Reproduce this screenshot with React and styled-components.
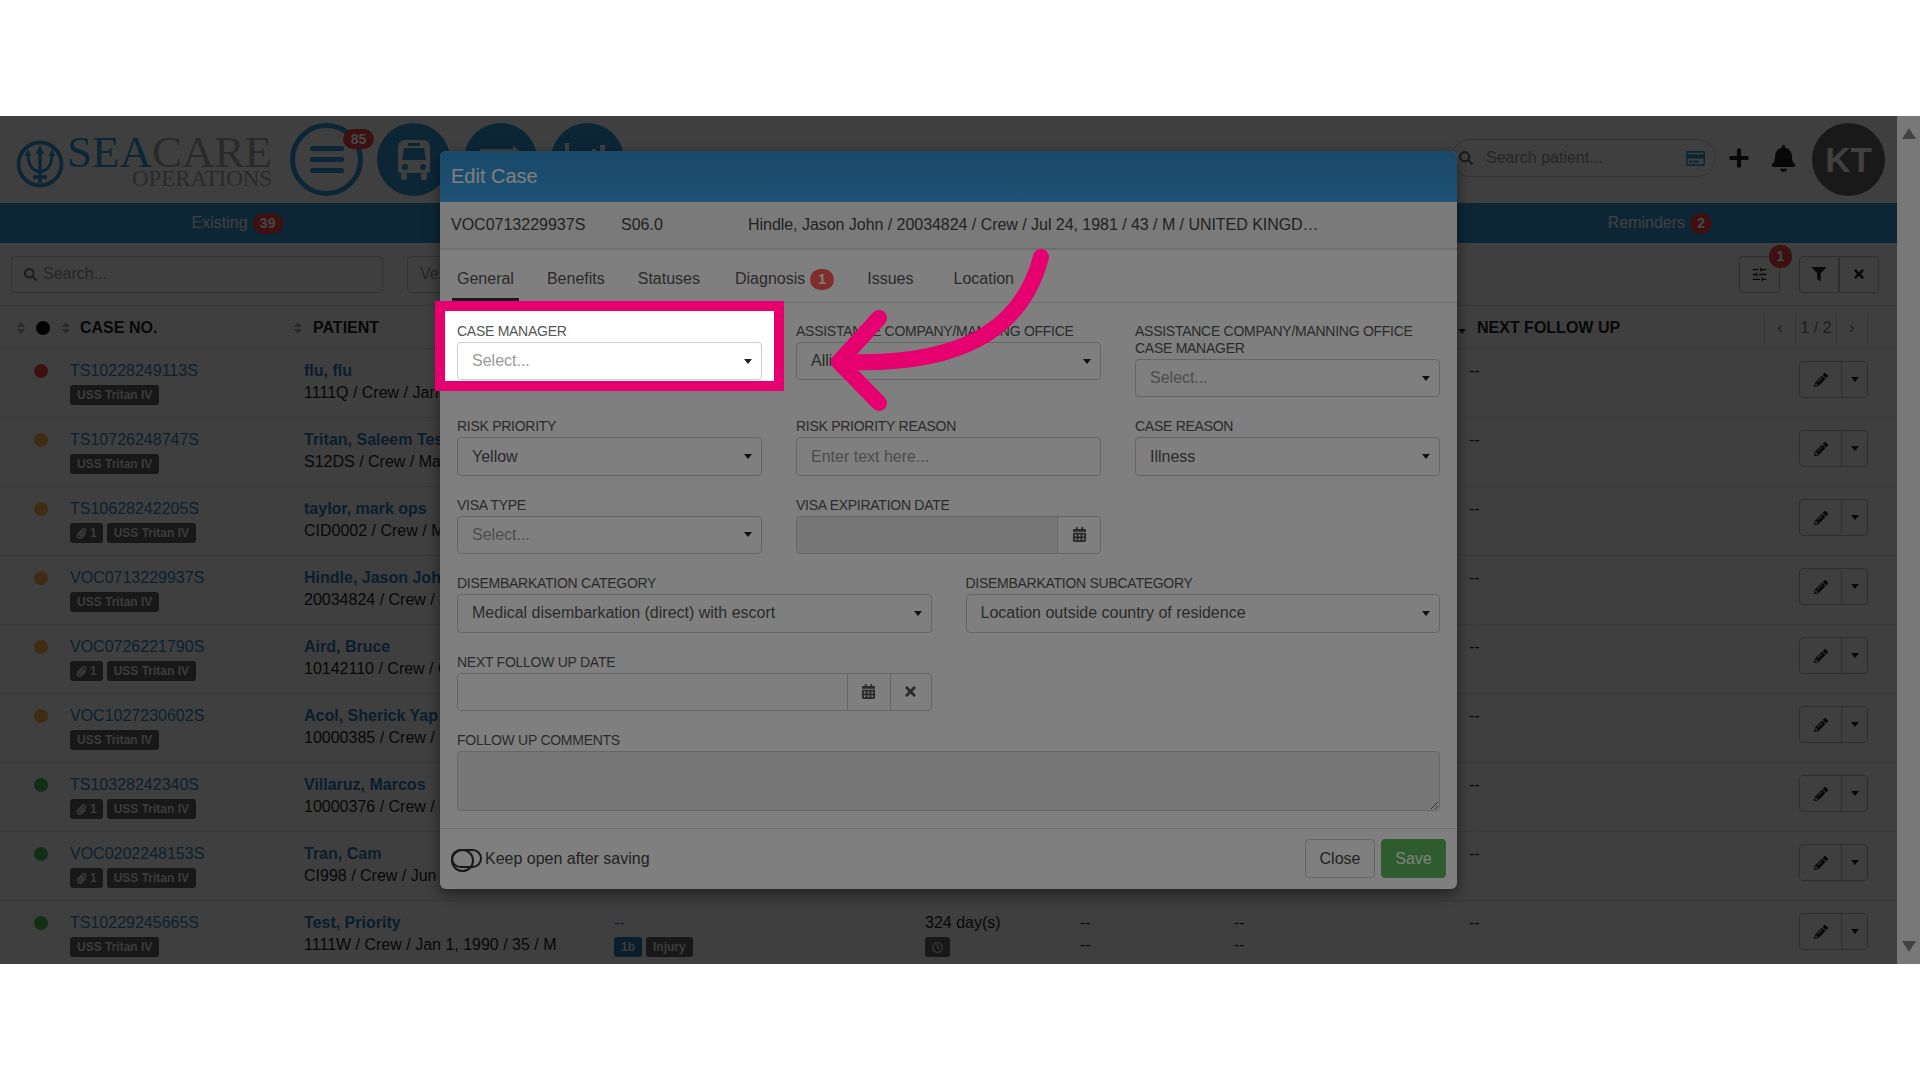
import React from "react";
import styled, { createGlobalStyle } from "styled-components";
import {
  FaSearch,
  FaRegCreditCard,
  FaPlus,
  FaBell,
  FaFilter,
  FaTimes,
  FaPencilAlt,
  FaPaperclip,
  FaCalendarAlt,
  FaRegClock,
} from "react-icons/fa";
import { SlidersHorizontal } from "lucide-react";

const BLUE = "#3498db";
const PINK = "#e6006f";
const RED = "#7d2323";
const AMBER = "#7d5a28";
const GREEN = "#235f28";

const cases = [
  { id: "TS10228249113S", dot: RED, name: "flu, flu", info: "1111Q / Crew / Jan 1" },
  { id: "TS10726248747S", dot: AMBER, name: "Tritan, Saleem Test", info: "S12DS / Crew / Mar" },
  { id: "TS10628242205S", dot: AMBER, clip: true, name: "taylor, mark ops", info: "CID0002 / Crew / Mar" },
  { id: "VOC0713229937S", dot: AMBER, name: "Hindle, Jason John", info: "20034824 / Crew / Jul" },
  { id: "VOC0726221790S", dot: AMBER, clip: true, name: "Aird, Bruce", info: "10142110 / Crew / Oct" },
  { id: "VOC1027230602S", dot: AMBER, name: "Acol, Sherick Yap", info: "10000385 / Crew / Sep" },
  { id: "TS10328242340S", dot: GREEN, clip: true, name: "Villaruz, Marcos", info: "10000376 / Crew / Dec" },
  { id: "VOC0202248153S", dot: GREEN, clip: true, name: "Tran, Cam", info: "CI998 / Crew / Jun" },
  {
    id: "TS10229245665S",
    dot: GREEN,
    name: "Test, Priority",
    info: "1111W / Crew / Jan 1, 1990 / 35 / M",
    diagnosis: true,
  },
];

const GlobalStyle = createGlobalStyle`
  html, body {
    margin: 0;
    height: 100%;
    overflow: hidden;
    background: #ffffff;
    font-family: "Liberation Sans", Arial, sans-serif;
    font-size: 16px;
  }
  * { box-sizing: border-box; }
`;

const Stage = styled.div`
  height: 100vh;
  display: flex;
  align-items: center;
`;

const Frame = styled.div`
  position: relative;
  width: 100%;
  height: 848px;
  display: flex;
  overflow: hidden;
`;

const Main = styled.div`
  position: relative;
  flex: 1;
  min-width: 0;
  background: #ffffff;
  color: #222;
`;

const Rail = styled.div`
  width: 23px;
  background: #f1f1f1;
  display: flex;
  flex-direction: column;
  justify-content: space-between;
  align-items: center;
  padding: 12px 0 12px;
`;

const RailArrow = styled.div`
  width: 0;
  height: 0;
  border-left: 7px solid transparent;
  border-right: 7px solid transparent;
  ${(p) => (p.$down ? "border-top: 11px solid #888;" : "border-bottom: 11px solid #888;")}
`;

/* page header */
const Header = styled.header`
  height: 87px;
  display: flex;
  align-items: center;
  padding: 0 12px 0 16px;
`;

const Logo = styled.div`
  display: flex;
  align-items: flex-start;
  width: 256px;
  margin-right: 18px;
`;

const LogoText = styled.div`
  font-family: "Liberation Serif", "Times New Roman", serif;
  text-align: right;
  color: #aaa;
  flex: 1;
  margin-left: 3px;
  padding-top: 1px;
`;

const LogoMain = styled.div`
  font-size: 45px;
  line-height: 42px;
  white-space: nowrap;
  span {
    color: ${BLUE};
  }
`;

const LogoSub = styled.div`
  font-size: 23px;
  line-height: 20px;
  letter-spacing: -0.05px;
  margin-top: -4px;
`;

const NavCircle = styled.div`
  position: relative;
  width: 73px;
  height: 73px;
  flex: none;
  margin-right: 14px;
  border-radius: 50%;
  display: flex;
  align-items: center;
  justify-content: center;
  color: #ffffff;
  background: ${(p) => (p.$ring ? "#ffffff" : BLUE)};
  border: ${(p) => (p.$ring ? `5px solid ${BLUE}` : "none")};
`;

const Burger = styled.div`
  width: 34px;
  display: flex;
  flex-direction: column;
  gap: 6px;
  i {
    display: block;
    height: 5px;
    border-radius: 2px;
    background: ${BLUE};
  }
`;

const Badge = styled.span`
  position: ${(p) => (p.$float ? "absolute" : "relative")};
  z-index: 1;
  ${(p) => p.$float && `top: ${p.$top}px; right: ${p.$right}px;`}
  display: inline-flex;
  align-items: center;
  justify-content: center;
  min-width: ${(p) => p.$w || 22}px;
  height: ${(p) => p.$h || 21}px;
  padding: 0 6px;
  border-radius: 11px;
  background: #7a2222;
  color: #8f8f8f;
  font-size: 14px;
  font-weight: bold;
`;

const TabBadge = styled(Badge)`
  background: #ff5a5a;
  color: #ffffff;
`;

const HeadRight = styled.div`
  margin-left: auto;
  margin-bottom: 3px;
  display: flex;
  align-items: center;
`;

const PatientSearch = styled.div`
  width: 265px;
  height: 38px;
  border: 1px solid #ccc;
  border-radius: 19px;
  display: flex;
  align-items: center;
  padding: 0 10px 0 7px;
  color: #777;
`;

const PatientSearchText = styled.span`
  flex: 1;
  margin-left: 13px;
  color: #999;
`;

const HeadIcon = styled.div`
  display: flex;
  justify-content: center;
  width: ${(p) => p.$w}px;
  color: #222;
`;

const Avatar = styled.div`
  position: relative;
  z-index: 1;
  width: 73px;
  height: 73px;
  margin: 3px 0 0 8px;
  border-radius: 50%;
  background: #333333;
  color: #808080;
  display: flex;
  align-items: center;
  justify-content: center;
  font-size: 35px;
  font-weight: bold;
`;

/* section tabs */
const SectionTabs = styled.nav`
  height: 40px;
  background: ${BLUE};
  display: grid;
  grid-template-columns: repeat(4, 1fr);
`;

const SectionTab = styled.div`
  display: flex;
  align-items: center;
  justify-content: center;
  gap: 5px;
  color: #ffffff;
`;

/* toolbar */
const Toolbar = styled.div`
  height: 63px;
  border-bottom: 1px solid #ddd;
  display: flex;
  align-items: center;
  padding: 0 18px 0 11px;
`;

const FilterInput = styled.div`
  width: ${(p) => p.$w}px;
  height: 37px;
  margin-right: 24px;
  border: 1px solid #ccc;
  border-radius: 4px;
  display: flex;
  align-items: center;
  gap: 6px;
  padding: 0 12px;
  color: #999;
`;

const ToolRight = styled.div`
  margin-left: auto;
  display: flex;
  align-items: center;
`;

const ToolButton = styled.div`
  position: relative;
  width: ${(p) => p.$w || 40}px;
  height: 37px;
  border: 1px solid #bbb;
  margin-left: ${(p) => p.$gap || 0}px;
  border-radius: ${(p) => p.$radius || "4px"};
  display: flex;
  align-items: center;
  justify-content: center;
  color: #222;
`;

/* table */
const HeadRow = styled.div`
  height: 43px;
  padding-top: 2px;
  border-bottom: 1px solid #ddd;
  display: flex;
  align-items: center;
  font-weight: bold;
  white-space: nowrap;
`;

const HeadLead = styled.div`
  width: 76px;
  padding-left: 17px;
  display: flex;
  align-items: center;
`;

const HeadCell = styled.div`
  width: ${(p) => p.$w}px;
  display: flex;
  align-items: center;
  gap: 11px;
  padding-left: ${(p) => p.$pad || 0}px;
`;

const Sort = styled.span`
  flex: none;
  width: 8px;
  display: inline-flex;
  flex-direction: column;
  gap: 2px;
  &::before,
  &::after {
    content: "";
    width: 0;
    height: 0;
    border-left: 4px solid transparent;
    border-right: 4px solid transparent;
  }
  &::before {
    border-bottom: 5px solid ${(p) => (p.$only ? "transparent" : "#aaa")};
  }
  &::after {
    border-top: 5px solid ${(p) => (p.$only ? "#333" : "#aaa")};
  }
`;

const HeadDot = styled.span`
  width: 14px;
  height: 14px;
  margin: 0 12px 0 11px;
  border-radius: 50%;
  background: #000;
`;

const Pager = styled.div`
  margin-left: auto;
  margin-right: 29px;
  height: 31px;
  display: flex;
  font-weight: normal;
  color: #777;
`;

const PagerCell = styled.div`
  width: ${(p) => p.$w}px;
  display: flex;
  align-items: center;
  justify-content: center;
  border-left: 1px solid #ccc;
  ${(p) => p.$last && "border-right: 1px solid #ccc;"}
`;

const Row = styled.div`
  height: 69px;
  border-bottom: 1px solid #e8e8e8;
  display: grid;
  grid-template-columns: 70px 234px 310px 311px 155px 154px 235px 330px 98px;
  white-space: nowrap;
`;

const Cell = styled.div`
  padding-top: 11px;
  line-height: 22px;
`;

const StatusDot = styled.div`
  position: relative;
  z-index: 1;
  width: 14px;
  height: 14px;
  margin: 15px 0 0 34px;
  border-radius: 50%;
  background: ${(p) => p.$color};
`;

const CaseLink = styled.div`
  color: #2f85c4;
`;

const TagRow = styled.div`
  display: flex;
  gap: 4px;
  margin-top: 3px;
`;

const Tag = styled.span`
  position: relative;
  z-index: 1;
  height: 20px;
  padding: 0 ${(p) => p.$pad || 7}px;
  border-radius: 3px;
  background: ${(p) => p.$bg || "#303030"};
  color: #787878;
  font-size: 12px;
  font-weight: bold;
  line-height: 19px;
  display: inline-flex;
  align-items: center;
  gap: 3px;
`;

const PatientName = styled.div`
  color: #2a78b8;
  font-weight: bold;
`;

const Actions = styled.div`
  display: flex;
  width: 69px;
  height: 37px;
  margin-top: 12px;
  border: 1px solid #bbb;
  border-radius: 4px;
  color: #222;
`;

const ActionPart = styled.div`
  width: ${(p) => p.$w}px;
  display: flex;
  align-items: center;
  justify-content: center;
  & + & {
    border-left: 1px solid #bbb;
  }
`;

const Caret = styled.span`
  flex: none;
  width: 0;
  height: 0;
  border-left: 4px solid transparent;
  border-right: 4px solid transparent;
  border-top: 5px solid ${(p) => p.$color || "#222"};
`;

/* modal */
const Backdrop = styled.div`
  position: absolute;
  inset: 0;
  background: rgba(0, 0, 0, 0.5);
  display: flex;
  justify-content: center;
  align-items: flex-start;
  padding-top: 35px;
`;

const Modal = styled.div`
  width: 1017px;
  background: #ffffff;
  border-radius: 6px;
  box-shadow: 0 5px 15px rgba(0, 0, 0, 0.5);
`;

const ModalHeader = styled.div`
  height: 51px;
  padding-left: 11px;
  display: flex;
  align-items: center;
  border-radius: 6px 6px 0 0;
  background: linear-gradient(#3492d3, #3ba2ea);
  color: #ffffff;
  font-size: 20px;
`;

const InfoBar = styled.div`
  height: 48px;
  padding-left: 11px;
  background: #f5f5f5;
  border-bottom: 2px solid #ddd;
  display: flex;
  align-items: center;
  color: #444;
  white-space: nowrap;
`;

const InfoItem = styled.span`
  width: ${(p) => p.$w}px;
`;

const InfoSummary = styled.span`
  letter-spacing: -0.04px;
`;

const TabBar = styled.div`
  height: 53px;
  padding-left: 12px;
  border-bottom: 1px solid #ddd;
  display: flex;
`;

const Tab = styled.div`
  margin-right: ${(p) => p.$gap || 23}px;
  padding: 10px 5px 0;
  display: flex;
  align-items: center;
  gap: 5px;
  color: #555;
  border-bottom: 4px solid ${(p) => (p.$active ? "#333" : "transparent")};
`;

const FormBody = styled.div`
  padding: 20px 17px 17px;
`;

const FormRow = styled.div`
  display: grid;
  grid-template-columns: repeat(${(p) => p.$cols}, 1fr);
  column-gap: 34px;
  align-items: start;
  margin-bottom: ${(p) => (p.$last ? 0 : 21)}px;
`;

const Field = styled.div`
  min-width: 0;
`;

const HighlightField = styled(Field)`
  position: relative;
  z-index: 20;
  &::before {
    content: "";
    position: absolute;
    top: -22px;
    bottom: -11px;
    left: -22px;
    right: -22px;
    z-index: -1;
    background: #ffffff;
    border: 10px solid ${PINK};
  }
`;

const Label = styled.label`
  display: block;
  margin-bottom: 2px;
  font-size: 14px;
  line-height: 17px;
  letter-spacing: -0.27px;
  color: #555;
`;

const Select = styled.div`
  height: 38.4px;
  padding: 0 9px 0 14px;
  border: 1px solid #ccc;
  border-radius: 4px;
  background: #ffffff;
  display: flex;
  align-items: center;
  justify-content: space-between;
  color: ${(p) => (p.$placeholder ? "#999" : "#555")};
  white-space: nowrap;
`;

const Input = styled.div`
  height: 38.4px;
  padding: 0 14px;
  border: 1px solid #ccc;
  border-radius: 4px;
  background: #ffffff;
  display: flex;
  align-items: center;
  color: #999;
`;

const InputGroup = styled.div`
  height: 38.4px;
  display: flex;
  border: 1px solid #ccc;
  border-radius: 4px;
`;

const GroupInput = styled.div`
  flex: 1;
  border-radius: 4px 0 0 4px;
  background: ${(p) => (p.$disabled ? "#eeeeee" : "#ffffff")};
`;

const GroupAddon = styled.div`
  width: ${(p) => p.$w}px;
  border-left: 1px solid #ccc;
  display: flex;
  align-items: center;
  justify-content: center;
  color: #555;
`;

const TextArea = styled.textarea`
  display: block;
  width: 100%;
  height: 60px;
  padding: 6px 12px;
  border: 1px solid #ccc;
  border-radius: 4px;
  background: #eeeeee;
  outline: none;
  resize: vertical;
`;

const Footer = styled.div`
  height: 61px;
  padding: 0 11px;
  border-top: 1px solid #e5e5e5;
  display: flex;
  align-items: center;
`;

const Toggle = styled.span`
  position: relative;
  width: 31px;
  height: 19px;
  margin-right: 3px;
  border: 2px solid #333;
  border-radius: 10px;
  &::before {
    content: "";
    position: absolute;
    top: -2px;
    left: -2px;
    width: 19px;
    height: 19px;
    border: 2px solid #333;
    border-radius: 50%;
  }
`;

const KeepOpen = styled.span`
  color: #444;
`;

const FooterButtons = styled.div`
  margin-left: auto;
  display: flex;
  gap: 6px;
`;

const Button = styled.button`
  height: 39px;
  width: ${(p) => p.$w}px;
  padding: 0;
  border-radius: 4px;
  border: 1px solid ${(p) => (p.$primary ? "#5cb85c" : "#ccc")};
  background: ${(p) => (p.$primary ? "#5cb85c" : "#ffffff")};
  color: ${(p) => (p.$primary ? "#ffffff" : "#444")};
  font: inherit;
`;

/* tutorial layer */
const Dim = styled.div`
  position: absolute;
  inset: 0;
  z-index: 10;
  background: rgba(0, 0, 0, 0.5);
`;

const Arrow = styled.svg`
  position: absolute;
  left: 820px;
  top: 120px;
  z-index: 30;
`;

const SelectBox = ({ children, placeholder }) => (
  <Select $placeholder={placeholder}>
    <span>{children}</span>
    <Caret />
  </Select>
);

const TridentLogo = () => (
  <svg width="48" height="48" viewBox="0 0 48 48" style={{ marginTop: 10, flex: "none" }}>
    <g fill="none" stroke={BLUE}>
      <circle cx="24" cy="24" r="21.5" strokeWidth="4" />
      <path d="M24 8V43M17 37H31" strokeWidth="3.4" />
      <path d="M12 13C12 24 15 30 24 32C33 30 36 24 36 13" strokeWidth="3" />
    </g>
    <path d="M24 5L28.5 14H19.5ZM12 9L15.5 16H8.5ZM36 9L39.5 16H32.5Z" fill={BLUE} />
  </svg>
);

const BusFront = () => (
  <svg width="32" height="40" viewBox="0 0 32 40" fill="#ffffff">
    <path
      fillRule="evenodd"
      d="M7 0H25C29 0 32 3 32 7V31C32 32 31 33 30 33H2C1 33 0 32 0 31V7C0 3 3 0 7 0ZM10 3V6H22V3ZM6 8L4 20H28L26 8ZM7 24A3 3 0 1 0 7 30A3 3 0 1 0 7 24ZM25 24A3 3 0 1 0 25 30A3 3 0 1 0 25 24Z"
    />
    <rect x="3" y="33" width="6" height="7" rx="2" />
    <rect x="23" y="33" width="6" height="7" rx="2" />
  </svg>
);

const ArrowRightShape = () => (
  <svg width="73" height="73" viewBox="0 0 73 73" fill="#ffffff">
    <path d="M16 26H49V22L64 36L49 50V46H16Z" />
  </svg>
);

const ChartBars = () => (
  <svg width="73" height="73" viewBox="0 0 73 73" fill="#ffffff">
    <rect x="14" y="20" width="4" height="30" />
    <rect x="41" y="26" width="4" height="24" />
    <rect x="49" y="22" width="5" height="28" />
  </svg>
);

const CaseRow = ({ item }) => (
  <Row>
    <div>
      <StatusDot $color={item.dot} />
    </div>
    <Cell>
      <CaseLink>{item.id}</CaseLink>
      <TagRow>
        {item.clip && (
          <Tag $pad={6}>
            <FaPaperclip size={11} /> 1
          </Tag>
        )}
        <Tag>USS Tritan IV</Tag>
      </TagRow>
    </Cell>
    <Cell>
      <PatientName>{item.name}</PatientName>
      <div>{item.info}</div>
    </Cell>
    <Cell>
      {item.diagnosis && (
        <>
          <CaseLink>--</CaseLink>
          <TagRow>
            <Tag $bg="#143c5a">1b</Tag>
            <Tag>Injury</Tag>
          </TagRow>
        </>
      )}
    </Cell>
    <Cell>
      {item.diagnosis && (
        <>
          <div>324 day(s)</div>
          <TagRow>
            <Tag>
              <FaRegClock size={11} />
            </Tag>
          </TagRow>
        </>
      )}
    </Cell>
    <Cell>
      {item.diagnosis && (
        <>
          <div>--</div>
          <div>--</div>
        </>
      )}
    </Cell>
    <Cell>
      {item.diagnosis && (
        <>
          <div>--</div>
          <div>--</div>
        </>
      )}
    </Cell>
    <Cell>--</Cell>
    <div>
      <Actions>
        <ActionPart $w={41}>
          <FaPencilAlt size={14} />
        </ActionPart>
        <ActionPart $w={26}>
          <Caret />
        </ActionPart>
      </Actions>
    </div>
  </Row>
);

export default function App() {
  return (
    <>
      <GlobalStyle />
      <Stage>
        <Frame>
          <Main>
            <Header>
              <Logo>
                <TridentLogo />
                <LogoText>
                  <LogoMain>
                    <span>SEA</span>CARE
                  </LogoMain>
                  <LogoSub>OPERATIONS</LogoSub>
                </LogoText>
              </Logo>
              <NavCircle $ring>
                <Burger>
                  <i />
                  <i />
                  <i />
                </Burger>
                <Badge $float $top={1} $right={-16} $w={31} $h={20}>
                  85
                </Badge>
              </NavCircle>
              <NavCircle>
                <BusFront />
              </NavCircle>
              <NavCircle>
                <ArrowRightShape />
              </NavCircle>
              <NavCircle>
                <ChartBars />
              </NavCircle>
              <HeadRight>
                <PatientSearch>
                  <FaSearch size={14} />
                  <PatientSearchText>Search patient...</PatientSearchText>
                  <FaRegCreditCard size={19} color={BLUE} />
                </PatientSearch>
                <HeadIcon $w={46}>
                  <FaPlus size={22} />
                </HeadIcon>
                <HeadIcon $w={42}>
                  <FaBell size={27} />
                </HeadIcon>
                <Avatar>KT</Avatar>
              </HeadRight>
            </Header>

            <SectionTabs>
              <SectionTab>
                Existing <Badge $w={30}>39</Badge>
              </SectionTab>
              <SectionTab />
              <SectionTab />
              <SectionTab>
                Reminders <Badge>2</Badge>
              </SectionTab>
            </SectionTabs>

            <Toolbar>
              <FilterInput $w={372}>
                <FaSearch size={13} color="#777" />
                Search...
              </FilterInput>
              <FilterInput $w={300}>Vessel</FilterInput>
              <ToolRight>
                <ToolButton $w={41}>
                  <SlidersHorizontal size={17} strokeWidth={1.8} />
                  <Badge $float $top={-12} $right={-13} $w={23} $h={23}>
                    1
                  </Badge>
                </ToolButton>
                <ToolButton $gap={19} $radius="4px 0 0 4px">
                  <FaFilter size={14} />
                </ToolButton>
                <ToolButton $radius="0 4px 4px 0">
                  <FaTimes size={14} />
                </ToolButton>
              </ToolRight>
            </Toolbar>

            <HeadRow>
              <HeadLead>
                <Sort />
                <HeadDot />
                <Sort />
              </HeadLead>
              <HeadCell $w={218} $pad={4}>
                CASE NO.
              </HeadCell>
              <HeadCell $w={1164}>
                <Sort />
                PATIENT
              </HeadCell>
              <HeadCell $w={160}>
                <Sort $only />
                NEXT FOLLOW UP
              </HeadCell>
              <Pager>
                <PagerCell $w={31}>‹</PagerCell>
                <PagerCell $w={41}>1 / 2</PagerCell>
                <PagerCell $w={32} $last>
                  ›
                </PagerCell>
              </Pager>
            </HeadRow>

            {cases.map((item) => (
              <CaseRow key={item.id} item={item} />
            ))}

            <Backdrop>
              <Modal>
                <ModalHeader>Edit Case</ModalHeader>
                <InfoBar>
                  <InfoItem $w={170}>VOC0713229937S</InfoItem>
                  <InfoItem $w={127}>S06.0</InfoItem>
                  <InfoSummary>Hindle, Jason John / 20034824 / Crew / Jul 24, 1981 / 43 / M / UNITED KINGD…</InfoSummary>
                </InfoBar>
                <TabBar>
                  <Tab $active>General</Tab>
                  <Tab>Benefits</Tab>
                  <Tab $gap={25}>Statuses</Tab>
                  <Tab>
                    Diagnosis
                    <TabBadge $w={24}>1</TabBadge>
                  </Tab>
                  <Tab $gap={30}>Issues</Tab>
                  <Tab>Location</Tab>
                </TabBar>
                <FormBody>
                  <FormRow $cols={3}>
                    <HighlightField>
                      <Label>CASE MANAGER</Label>
                      <SelectBox placeholder>Select...</SelectBox>
                    </HighlightField>
                    <Field>
                      <Label>ASSISTANCE COMPANY/MANNING OFFICE</Label>
                      <SelectBox>Allianz</SelectBox>
                    </Field>
                    <Field>
                      <Label>ASSISTANCE COMPANY/MANNING OFFICE CASE MANAGER</Label>
                      <SelectBox placeholder>Select...</SelectBox>
                    </Field>
                  </FormRow>
                  <FormRow $cols={3}>
                    <Field>
                      <Label>RISK PRIORITY</Label>
                      <SelectBox>Yellow</SelectBox>
                    </Field>
                    <Field>
                      <Label>RISK PRIORITY REASON</Label>
                      <Input>Enter text here...</Input>
                    </Field>
                    <Field>
                      <Label>CASE REASON</Label>
                      <SelectBox>Illness</SelectBox>
                    </Field>
                  </FormRow>
                  <FormRow $cols={3}>
                    <Field>
                      <Label>VISA TYPE</Label>
                      <SelectBox placeholder>Select...</SelectBox>
                    </Field>
                    <Field>
                      <Label>VISA EXPIRATION DATE</Label>
                      <InputGroup>
                        <GroupInput $disabled />
                        <GroupAddon $w={43}>
                          <FaCalendarAlt size={15} />
                        </GroupAddon>
                      </InputGroup>
                    </Field>
                  </FormRow>
                  <FormRow $cols={2}>
                    <Field>
                      <Label>DISEMBARKATION CATEGORY</Label>
                      <SelectBox>Medical disembarkation (direct) with escort</SelectBox>
                    </Field>
                    <Field>
                      <Label>DISEMBARKATION SUBCATEGORY</Label>
                      <SelectBox>Location outside country of residence</SelectBox>
                    </Field>
                  </FormRow>
                  <FormRow $cols={2}>
                    <Field>
                      <Label>NEXT FOLLOW UP DATE</Label>
                      <InputGroup>
                        <GroupInput />
                        <GroupAddon $w={43}>
                          <FaCalendarAlt size={15} />
                        </GroupAddon>
                        <GroupAddon $w={41}>
                          <FaTimes size={15} />
                        </GroupAddon>
                      </InputGroup>
                    </Field>
                  </FormRow>
                  <FormRow $cols={1} $last>
                    <Field>
                      <Label>FOLLOW UP COMMENTS</Label>
                      <TextArea />
                    </Field>
                  </FormRow>
                </FormBody>
                <Footer>
                  <Toggle />
                  <KeepOpen>Keep open after saving</KeepOpen>
                  <FooterButtons>
                    <Button $w={70}>Close</Button>
                    <Button $w={65} $primary>
                      Save
                    </Button>
                  </FooterButtons>
                </Footer>
              </Modal>
            </Backdrop>
          </Main>
          <Rail>
            <RailArrow />
            <RailArrow $down />
          </Rail>
          <Dim />
          <Arrow width="240" height="300" viewBox="820 236 240 300" fill="none" stroke={PINK} strokeWidth="16" strokeLinecap="round" strokeLinejoin="round">
            <path d="M1041 257C1022 330 960 366 845 362" />
            <path d="M879 318L839 362L879 403" />
          </Arrow>
        </Frame>
      </Stage>
    </>
  );
}
